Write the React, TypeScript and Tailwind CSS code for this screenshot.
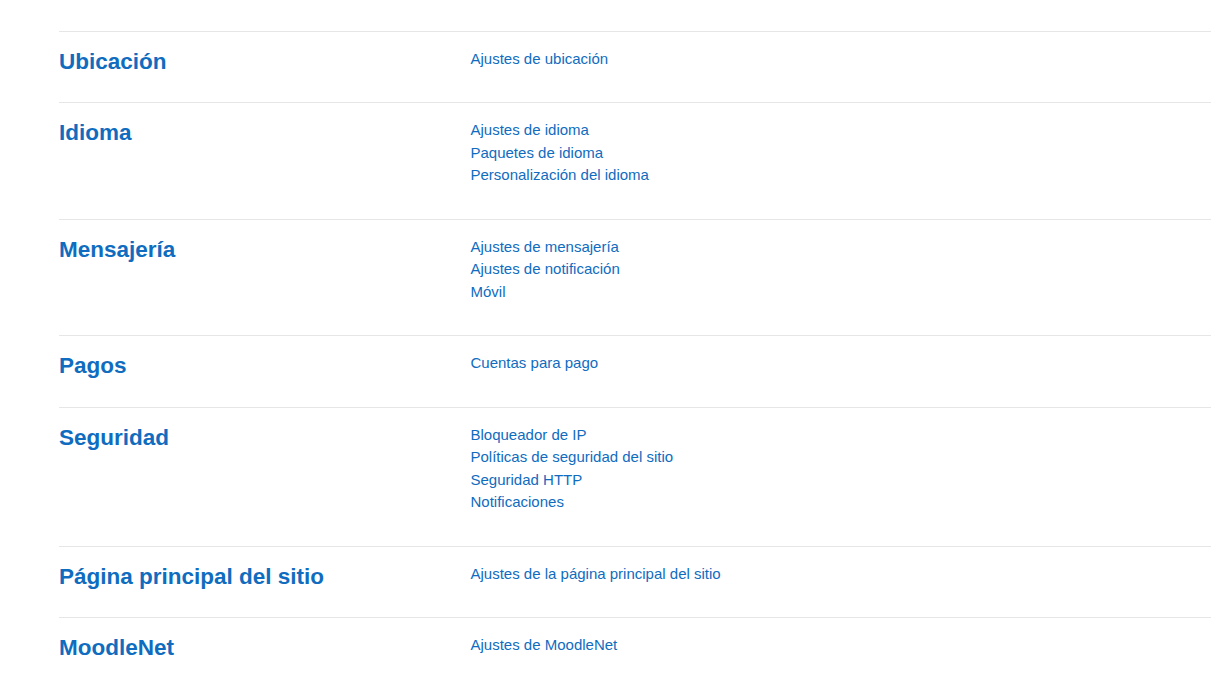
import React from "react";

const sections: { title: string; links: string[] }[] = [
  { title: "Ubicación", links: ["Ajustes de ubicación"] },
  { title: "Idioma", links: ["Ajustes de idioma", "Paquetes de idioma", "Personalización del idioma"] },
  { title: "Mensajería", links: ["Ajustes de mensajería", "Ajustes de notificación", "Móvil"] },
  { title: "Pagos", links: ["Cuentas para pago"] },
  {
    title: "Seguridad",
    links: ["Bloqueador de IP", "Políticas de seguridad del sitio", "Seguridad HTTP", "Notificaciones"],
  },
  { title: "Página principal del sitio", links: ["Ajustes de la página principal del sitio"] },
  { title: "MoodleNet", links: ["Ajustes de MoodleNet"] },
];

export default function App() {
  return (
    <div
      className="min-h-screen w-full overflow-hidden bg-white pl-[59px] pt-[14.8px]"
      style={{ fontFamily: '"Liberation Sans", Arial, sans-serif' }}
    >
      {sections.map((s) => (
        <div key={s.title}>
          <hr className="my-4 w-[1300px] border-0 border-t border-[#e6e6e6]" />
          <div className="flex">
            <div className="w-[411.5px] shrink-0">
              <h4 className="mb-2 text-[22.5px] font-bold leading-[27px] text-[#0f6cbf]">{s.title}</h4>
            </div>
            <ul className="mb-4">
              {s.links.map((l) => (
                <li key={l} className="text-[15px] leading-[22.5px] text-[#0f6cbf]">
                  <a href="#" className="hover:underline">
                    {l}
                  </a>
                </li>
              ))}
            </ul>
          </div>
        </div>
      ))}
    </div>
  );
}
